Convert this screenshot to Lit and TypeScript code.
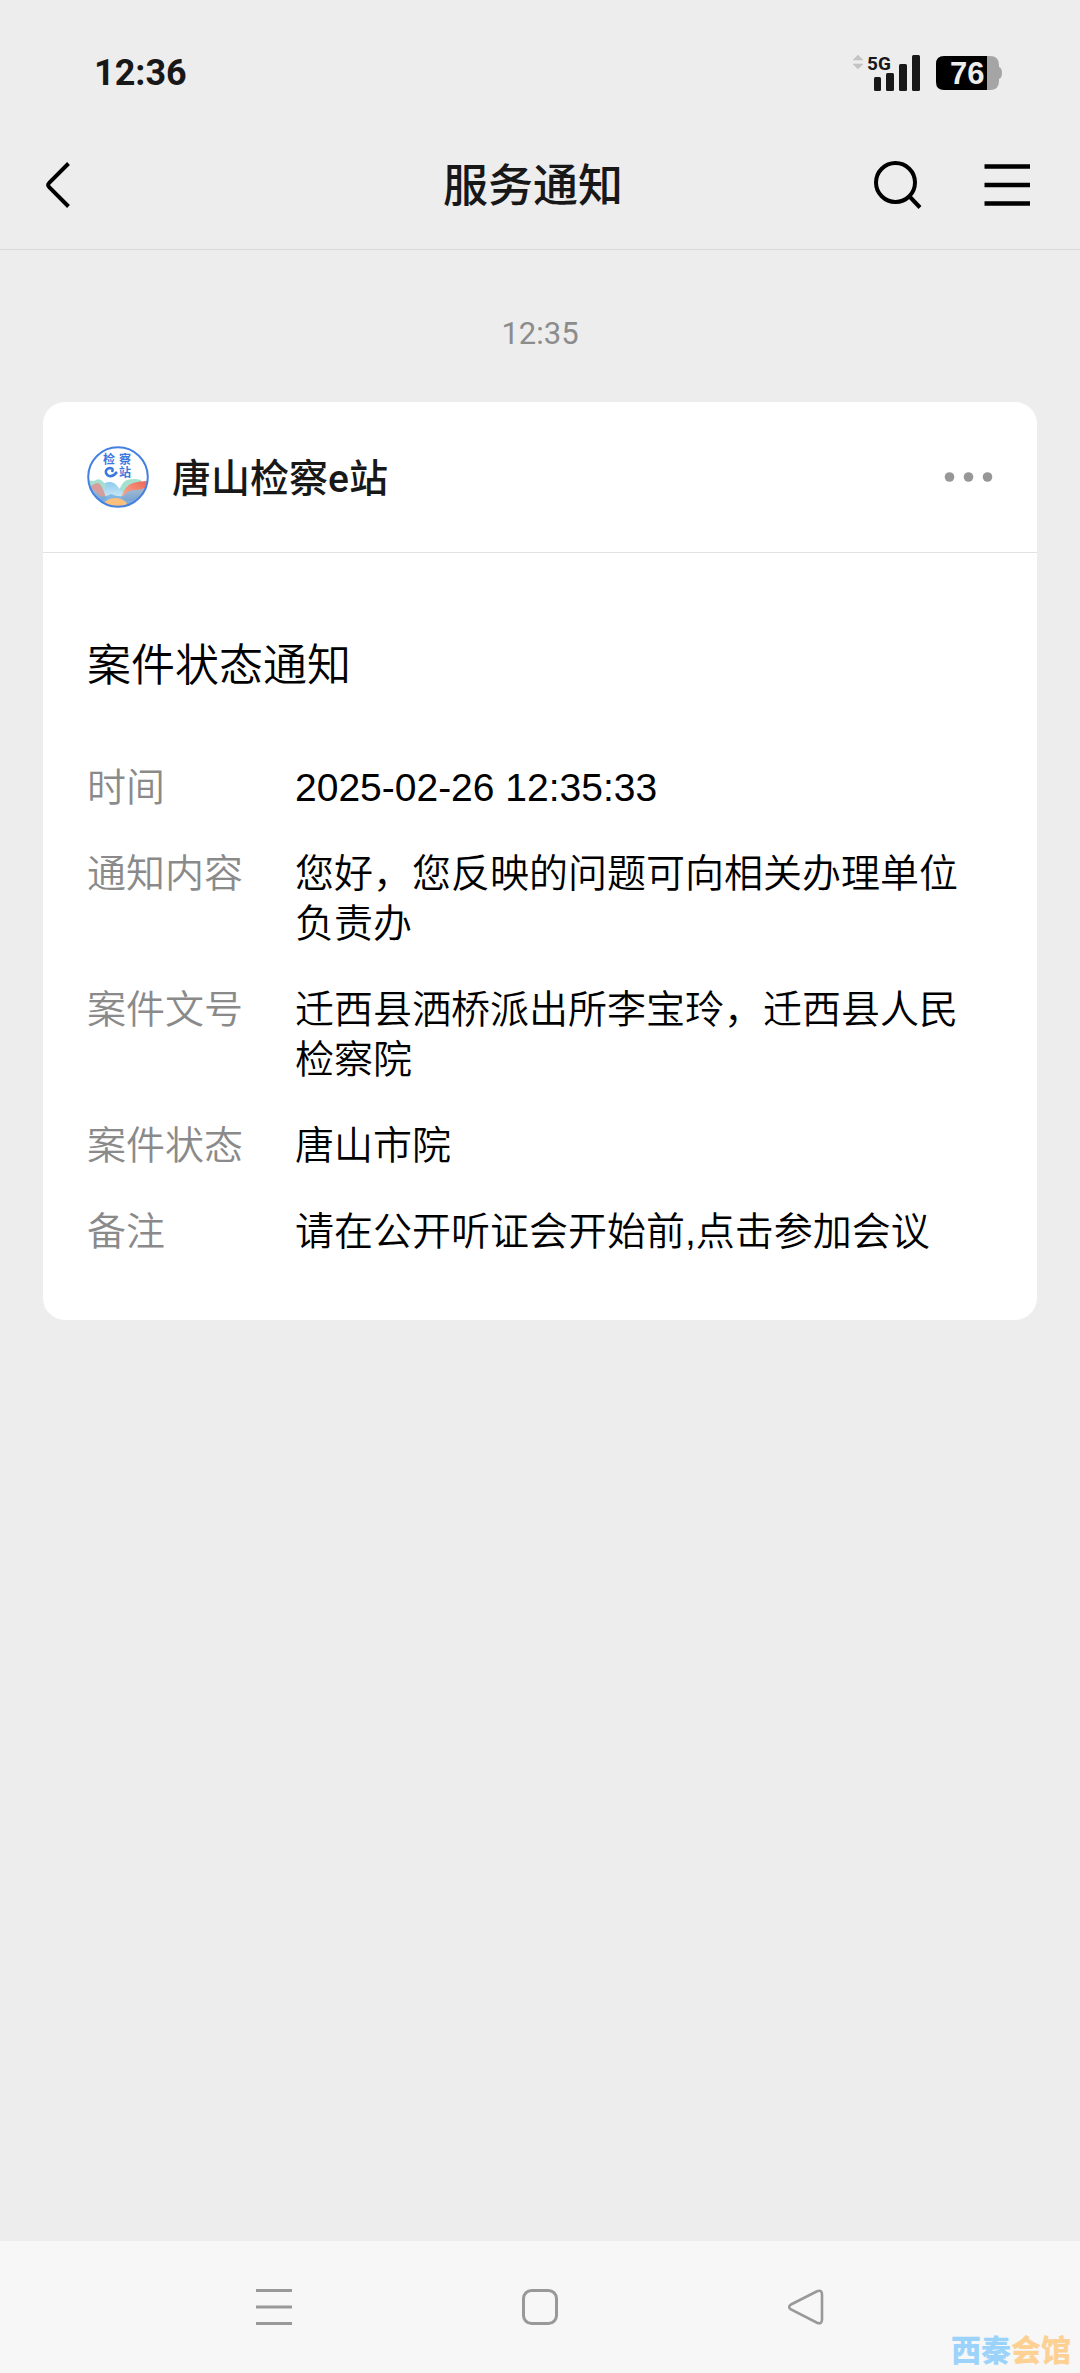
import { LitElement, html, css, svg } from "lit";
import { customElement, property } from "lit/decorators.js";

const FONT = css`"Liberation Sans", "Noto Sans CJK SC", sans-serif`;

interface Field {
  label: string;
  value: string;
}

const FIELDS: Field[] = [
  { label: "时间", value: "2025-02-26 12:35:33" },
  { label: "通知内容", value: "您好，您反映的问题可向相关办理单位负责办" },
  { label: "案件文号", value: "迁西县洒桥派出所李宝玲，迁西县人民检察院" },
  { label: "案件状态", value: "唐山市院" },
  { label: "备注", value: "请在公开听证会开始前,点击参加会议" },
];

@customElement("status-bar")
export class StatusBar extends LitElement {
  static styles = css`
    :host {
      display: flex;
      align-items: center;
      justify-content: space-between;
      box-sizing: border-box;
      height: 120px;
      padding: 26px 78px 0 94px;
      color: #181818;
    }
    .clock {
      font-family: Roboto, ${FONT};
      font-size: 36px;
      font-weight: 700;
      line-height: 40px;
    }
    .indicators {
      display: flex;
      align-items: center;
      gap: 16px;
    }
    .signal {
      display: block;
      overflow: visible;
    }
    .network {
      font-family: Roboto, sans-serif;
      font-size: 19px;
      font-weight: 700;
    }
    .level {
      font-family: "Liberation Sans", sans-serif;
      font-size: 31px;
      font-weight: 700;
    }
  `;

  render() {
    return html`
      <time class="clock">12:36</time>
      <div class="indicators">
        <svg class="signal" width="68" height="38" viewBox="0 0 68 38" fill="#181818" role="img" aria-label="5G">
          <path d="M6 1l5 5H1zM6 15l5-5H1z" fill="#c4c4c4" stroke="#c4c4c4" stroke-width=".6" />
          <text class="network" x="15" y="16">5G</text>
          <rect x="22" y="23" width="7" height="14" rx="1.5" />
          <rect x="34" y="19" width="8" height="18" rx="1.5" />
          <rect x="47" y="10" width="8" height="27" rx="1.5" />
          <rect x="60" y="1" width="8" height="36" rx="1.5" />
        </svg>
        <svg class="signal" width="66" height="34" viewBox="0 0 66 34" role="img" aria-label="76%">
          <path d="M51 0h3q9 0 9 9v2q3 1 3 6t-3 6v2q0 9-9 9h-3z" fill="#a5a5a5" />
          <path d="M8 0h43v34H8q-8 0-8-8V8q0-8 8-8z" fill="#000" />
          <text class="level" x="14" y="28" fill="#ededed">76</text>
        </svg>
      </div>
    `;
  }
}

@customElement("chat-header")
export class ChatHeader extends LitElement {
  @property() heading = "";

  static styles = css`
    :host {
      display: grid;
      grid-template-columns: 180px 1fr 194px;
      align-items: center;
      box-sizing: border-box;
      height: 130px;
      border-bottom: 1px solid #d9d9d9;
    }
    h1 {
      margin: 0;
      padding-top: 4px;
      color: #181818;
      font-size: 45px;
      font-weight: 500;
      line-height: 60px;
      text-align: center;
    }
    button {
      display: block;
      padding: 0;
      border: 0;
      background: none;
      color: #000;
    }
    svg {
      display: block;
    }
    .back {
      justify-self: start;
      padding: 10px 40px;
    }
    .actions {
      display: flex;
      justify-content: flex-end;
      gap: 55px;
      padding-right: 48px;
    }
  `;

  render() {
    return html`
      <button class="back" type="button" aria-label="返回">
        <svg width="36" height="50" viewBox="0 0 36 50" fill="none" stroke="currentColor" stroke-width="4">
          <path d="M28.500 3.500L9.200 22.900q-2.200 2.100 0 4.200L28.500 46.500" />
        </svg>
      </button>
      <h1>${this.heading}</h1>
      <div class="actions">
        <button type="button" aria-label="搜索">
          <svg width="54" height="50" viewBox="0 0 54 50" fill="none" stroke="currentColor" stroke-width="4">
            <circle cx="22.500" cy="22.500" r="19.500" />
            <path d="M36.500 36.500L47 47.500" />
          </svg>
        </button>
        <button type="button" aria-label="菜单">
          <svg width="50" height="50" viewBox="0 0 50 50" fill="none" stroke="currentColor" stroke-width="4.400">
            <path d="M2.500 6.500H48M2.500 25H48M2.500 43.500H48" />
          </svg>
        </button>
      </div>
    `;
  }
}

@customElement("notice-card")
export class NoticeCard extends LitElement {
  @property() sender = "";
  @property() heading = "";
  @property({ attribute: false }) fields: Field[] = [];

  static styles = css`
    :host {
      display: block;
      border-radius: 22px;
      background: #fff;
    }
    header {
      display: flex;
      align-items: center;
      box-sizing: border-box;
      height: 151px;
      padding: 0 44px;
      border-bottom: 1px solid #e2e2e2;
    }
    svg {
      display: block;
    }
    .avatar text {
      font-family: "Noto Sans CJK SC", sans-serif;
      font-size: 12px;
      font-weight: 700;
    }
    .sender {
      flex: 1;
      margin: 0;
      padding: 4px 0 0 23px;
      color: #181818;
      font-family: Roboto, "Noto Sans CJK SC", sans-serif;
      font-size: 39px;
      font-weight: 500;
      line-height: 50px;
    }
    button {
      padding: 20px 0;
      border: 0;
      background: none;
    }
    .body {
      padding: 88px 44px 63px;
      color: #000;
    }
    h3 {
      margin: 0 0 72px;
      font-size: 44px;
      font-weight: 350;
      line-height: 50px;
    }
    dl {
      display: grid;
      grid-template-columns: 172px 1fr;
      gap: 36px;
      margin: 0;
      font-size: 39px;
      font-weight: 350;
      line-height: 50px;
    }
    dt {
      color: #8a8a8a;
    }
    dd {
      margin: 0;
    }
  `;

  private avatar() {
    return svg`
      <svg class="avatar" width="62" height="62" viewBox="0 0 62 62" role="img" aria-label="检察e站">
        <defs>
          <clipPath id="disc"><circle cx="31" cy="31" r="29.500" /></clipPath>
          <linearGradient id="haze" x1="0" y1="0" x2="0" y2="1">
            <stop offset="0" stop-color="#8ccbef" />
            <stop offset="1" stop-color="#dff1f6" />
          </linearGradient>
          <linearGradient id="lake" x1="0" y1="0" x2="0" y2="1">
            <stop offset="0" stop-color="#9ccbe0" />
            <stop offset="1" stop-color="#4a90dd" />
          </linearGradient>
          <linearGradient id="cliff" x1="1" y1="0" x2="0" y2="1">
            <stop offset="0" stop-color="#ee6350" />
            <stop offset="1" stop-color="#fab49b" />
          </linearGradient>
        </defs>
        <circle cx="31" cy="31" r="31" fill="#fff" />
        <g clip-path="url(#disc)">
          <path d="M32 44q4-9 8-10 8-2 14 0v14H34z" fill="#a5dfd0" />
          <path d="M11 44q5-8 11-8 6 0 9 5 3 3 5 5l-2 10H12z" fill="url(#haze)" />
          <path d="M0 34q5 1 7 1 4-3 7-1 3 2 5 6l-5 8H0z" fill="#a5dfd0" />
          <path d="M2 42q5-5 9-5 4 1 8 15l-9 6z" fill="#d79c9c" />
          <path d="M34 52q4-13 12-15 7-2 16-2v20H38z" fill="url(#cliff)" />
          <path d="M0 41q7 1 13 9 6 1 11-2 7 3 12 2 6-7 12-6 6 0 14-4v22H0z" fill="url(#lake)" opacity=".85" />
          <path d="M15 59q5-7 13-7 7 0 12 5l-3 6H18z" fill="#fbc07c" />
        </g>
        <circle cx="31" cy="31" r="29.800" fill="none" stroke="#4580e0" stroke-width="2" />
        <g fill="#3b78dc">
          <text x="16" y="18">检</text>
          <text x="32" y="18">察</text>
          <text x="32" y="31">站</text>
        </g>
        <path d="M25 26q2-4-2-4-5 1-4 5 2 5 8 2M27 29l3-3" fill="none" stroke="#3b78dc" stroke-width="2.600" />
      </svg>
    `;
  }

  render() {
    return html`
      <header>
        ${this.avatar()}
        <h2 class="sender">${this.sender}</h2>
        <button type="button" aria-label="更多">
          <svg width="50" height="10" viewBox="0 0 50 10" fill="#979797">
            <circle cx="6.500" cy="5" r="4.800" />
            <circle cx="25.500" cy="5" r="4.800" />
            <circle cx="44.500" cy="5" r="4.800" />
          </svg>
        </button>
      </header>
      <div class="body">
        <h3>${this.heading}</h3>
        <dl>
          ${this.fields.map(
            (field) => html`<dt>${field.label}</dt><dd>${field.value}</dd>`,
          )}
        </dl>
      </div>
    `;
  }
}

@customElement("system-nav")
export class SystemNav extends LitElement {
  static styles = css`
    :host {
      display: grid;
      grid-template-columns: repeat(3, 1fr);
      align-items: center;
      justify-items: center;
      box-sizing: border-box;
      height: 132px;
      padding: 0 13%;
      background: #f7f7f7;
    }
    button {
      padding: 20px;
      border: 0;
      background: none;
      color: #999;
    }
    svg {
      display: block;
    }
  `;

  render() {
    return html`
      <button type="button" aria-label="最近任务">
        <svg width="36" height="36" viewBox="0 0 36 36" fill="none" stroke="currentColor" stroke-width="3">
          <path d="M0 1.500H36M0 18H36M0 34.500H36" />
        </svg>
      </button>
      <button type="button" aria-label="主屏幕">
        <svg width="36" height="36" viewBox="0 0 36 36" fill="none" stroke="currentColor" stroke-width="3">
          <rect x="1.500" y="1.500" width="33" height="33" rx="8" />
        </svg>
      </button>
      <button type="button" aria-label="返回">
        <svg width="36" height="36" viewBox="0 0 36 36" fill="none" stroke="currentColor" stroke-width="2.600">
          <path d="M3 15.500L29 2.300q5-1.800 5 3.200V30.500q0 5-5 3.200L3 20.500q-3.600-2.500 0-5z" />
        </svg>
      </button>
    `;
  }
}

@customElement("app-root")
export class AppRoot extends LitElement {
  static styles = css`
    :host {
      display: flex;
      flex-direction: column;
      position: relative;
      min-height: 100vh;
      background: #ededed;
      font-family: ${FONT};
    }
    main {
      flex: 1;
      padding: 64px 43px;
    }
    .stamp {
      display: block;
      margin-bottom: 48px;
      color: #8c8c8c;
      font-family: Roboto, ${FONT};
      font-size: 31px;
      line-height: 40px;
      text-align: center;
    }
    .watermark {
      position: absolute;
      right: 9px;
      bottom: 6px;
      color: #9bd3fb;
      font-size: 30px;
      font-weight: 900;
      line-height: 32px;
    }
    .watermark-end {
      color: #fdd193;
    }
  `;

  render() {
    return html`
      <status-bar></status-bar>
      <chat-header heading="服务通知"></chat-header>
      <main>
        <time class="stamp">12:35</time>
        <notice-card sender="唐山检察e站" heading="案件状态通知" .fields=${FIELDS}></notice-card>
      </main>
      <system-nav></system-nav>
      <div class="watermark">西秦<span class="watermark-end">会馆</span></div>
    `;
  }
}
